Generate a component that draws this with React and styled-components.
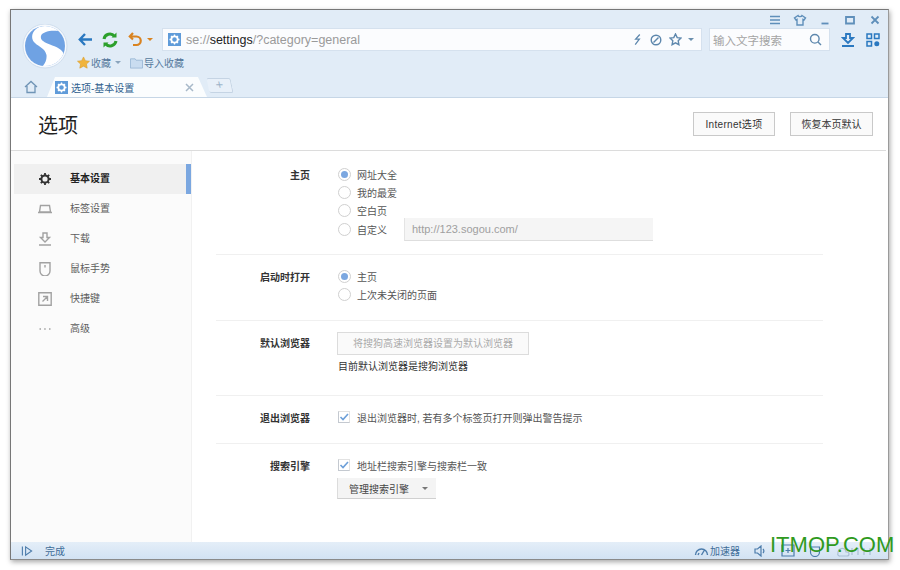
import React from "react";
import styled, { createGlobalStyle } from "styled-components";

const Global = createGlobalStyle`
  html, body {
    margin: 0;
    padding: 0;
    width: 900px;
    height: 570px;
    overflow: hidden;
    background: #fff;
    font-family: "Liberation Sans", "Noto Sans CJK SC", sans-serif;
    font-size: 10px;
    color: #444;
  }
  * { box-sizing: border-box; }
`;

const Frame = styled.div`
  position: relative;
  width: 900px;
  height: 570px;
  padding: 9px 0 0 10px;
`;

const Win = styled.div`
  width: 879px;
  height: 551px;
  border: 1px solid #777;
  border-right-color: #9a9a9a;
  border-bottom-color: #8a8a8a;
  box-shadow: 1px 2px 5px rgba(0, 0, 0, 0.35);
  display: flex;
  flex-direction: column;
  background: #fff;
`;

const Chrome = styled.header`
  height: 88px;
  background: #e1ecf7;
  border-bottom: 1px solid #c6d6e6;
  display: grid;
  grid-template-columns: 67px 1fr;
  grid-template-rows: 16px 26px 25px 20px;
`;

const LogoCell = styled.div`
  grid-column: 1;
  grid-row: 1 / 4;
  padding: 14px 0 0 11px;
`;

const Controls = styled.div`
  grid-column: 2;
  grid-row: 1;
  display: flex;
  justify-content: flex-end;
  align-items: center;
  padding: 3px 6px 0 0;
  gap: 11px;
`;

const Ctl = styled.svg`
  width: 14px;
  height: 12px;
  fill: none;
  stroke: #5f8fba;
  stroke-width: 1.4;
`;

const Toolbar = styled.div`
  grid-column: 2;
  grid-row: 2;
  display: flex;
  align-items: center;
  padding-top: 1px;
`;

const NavIcons = styled.div`
  width: 84px;
  display: flex;
  align-items: center;
  gap: 9px;
`;

const AddressBar = styled.div`
  width: 540px;
  height: 23px;
  background: #fbfcfe;
  border: 1px solid #d5e1ee;
  display: flex;
  align-items: center;
  padding: 0 7px 0 5px;
`;

const Favicon = styled.svg`
  width: 13px;
  height: 13px;
  flex: none;
`;

const Url = styled.div`
  flex: 1;
  margin-left: 5px;
  font-size: 12.5px;
  color: #9a9a9a;
  b {
    font-weight: 400;
    color: #222;
  }
`;

const AddrIcons = styled.div`
  display: flex;
  align-items: center;
  gap: 7px;
`;

const Small = styled.svg`
  width: ${(p) => p.$size || 12}px;
  height: ${(p) => p.$size || 12}px;
  fill: none;
  stroke: #5d87ad;
  stroke-width: 1.4;
  flex: none;
`;

const Caret = styled.i`
  display: block;
  width: 0;
  height: 0;
  flex: none;
  margin-left: ${(p) => p.$left || 0}px;
  border-left: 3px solid transparent;
  border-right: 3px solid transparent;
  border-top: 3px solid ${(p) => p.$color || "#6b8fae"};
`;

const SearchBox = styled.div`
  width: 121px;
  height: 23px;
  margin-left: 7px;
  background: #fbfcfe;
  border: 1px solid #d5e1ee;
  display: flex;
  align-items: center;
  justify-content: space-between;
  padding: 0 7px 0 3px;
  font-size: 11.5px;
  color: #a4a4a4;
`;

const ToolRight = styled.div`
  display: flex;
  align-items: center;
  gap: 11px;
  margin-left: 11px;
`;

const Bookmarks = styled.div`
  grid-column: 2;
  grid-row: 3;
  display: flex;
  align-items: center;
  margin-left: -1px;
  padding-bottom: 4px;
  color: #55799c;
  font-size: 10px;
`;

const Mark = styled.div`
  display: flex;
  align-items: center;
  gap: 1px;
  margin-right: ${(p) => p.$gap || 0}px;
`;

const TabRow = styled.div`
  grid-column: 1 / 3;
  grid-row: 4;
  display: flex;
  align-items: flex-end;
  padding-left: 13px;
`;

const HomeIcon = styled.svg`
  width: 14px;
  height: 14px;
  margin-bottom: 3px;
  fill: none;
  stroke: #6f94b6;
  stroke-width: 1.3;
`;

const Tab = styled.div`
  width: 160px;
  height: 20px;
  margin-left: 9px;
  background: #fbfdfe;
  clip-path: polygon(0 100%, 8px 0, 151px 0, 160px 100%);
  display: flex;
  align-items: center;
  padding: 0 13px 0 8px;
  color: #2f5f8e;
  font-size: 10px;
  span {
    flex: 1;
    margin-left: 3px;
  }
`;

const AddTab = styled.div`
  width: 24px;
  height: 15px;
  margin: 0 0 4px 1px;
  border: 1px solid #c5d4e4;
  border-left: none;
  border-radius: 2px;
  background: #e8f0f9;
  color: #9db4ca;
  font-size: 13px;
  line-height: 12px;
  text-align: center;
  transform: skewX(12deg);
`;

const Body = styled.div`
  flex: 1;
  min-height: 0;
  display: flex;
  flex-direction: column;
`;

const PageHead = styled.div`
  height: 53px;
  flex: none;
  margin-right: 2px;
  border-bottom: 1px solid #dcdcdc;
  display: flex;
  align-items: center;
  padding: 0 13px 0 27px;
`;

const PageTitle = styled.h1`
  flex: 1;
  margin: 0;
  font-size: 20px;
  font-weight: 400;
  color: #222;
`;

const HeadButton = styled.button`
  width: ${(p) => p.$w}px;
  height: 24px;
  margin: 0 0 1px ${(p) => p.$left || 0}px;
  background: #fafafa;
  border: 1px solid #c9c9c9;
  font: inherit;
  font-size: 10px;
  letter-spacing: ${(p) => p.$spread || 0}px;
  color: #333;
  padding: 0;
`;

const Columns = styled.div`
  flex: 1;
  min-height: 0;
  display: flex;
`;

const Sidebar = styled.nav`
  width: 181px;
  flex: none;
  background: #fbfbfb;
  border-right: 1px solid #f1f1f1;
  padding: 13px 0 0 3px;
`;

const Item = styled.div`
  height: 30px;
  display: flex;
  align-items: center;
  padding-left: 24px;
  font-size: 10px;
  color: ${(p) => (p.$active ? "#222" : "#5e5e5e")};
  font-weight: ${(p) => (p.$active ? 700 : 400)};
  background: ${(p) => (p.$active ? "#f0f0f0" : "transparent")};
  border-right: 5px solid ${(p) => (p.$active ? "#7ba7e0" : "transparent")};
  span {
    margin-bottom: 3px;
  }
`;

const ItemIcon = styled.svg`
  width: 14px;
  height: 14px;
  margin-right: 18px;
  fill: none;
  stroke: ${(p) => p.$color || "#a2a2a2"};
  stroke-width: 1.4;
  flex: none;
`;

const Main = styled.main`
  flex: 1;
  padding-left: 24px;
`;

const Section = styled.section`
  width: 607px;
  height: ${(p) => p.$h}px;
  padding-top: ${(p) => p.$top}px;
  border-bottom: ${(p) => (p.$last ? "none" : "1px solid #f0f0f0")};
  display: grid;
  grid-template-columns: 94px 1fr;
  column-gap: 27px;
  align-content: start;
`;

const Label = styled.div`
  text-align: right;
  font-weight: 700;
  font-size: 10px;
  line-height: ${(p) => p.$lh || 22}px;
  color: #333;
`;

const Line = styled.label`
  height: 18.33px;
  display: flex;
  align-items: center;
  padding-left: 1px;
  font-size: 10px;
  color: #555;
`;

const Radio = styled.i`
  width: 13px;
  height: 13px;
  margin-right: 6px;
  border-radius: 50%;
  border: 1px solid #d0d0d0;
  background: #fff;
  flex: none;
  display: flex;
  align-items: center;
  justify-content: center;
  &::after {
    content: "";
    width: 7px;
    height: 7px;
    border-radius: 50%;
    background: ${(p) => (p.$on ? "#7ba7e0" : "transparent")};
  }
`;

const Check = styled.i`
  width: 12px;
  height: 12px;
  margin-right: 7px;
  border: 1px solid #e2e2e2;
  border-left-color: #c4c9d0;
  border-bottom-color: #c4c9d0;
  background: #fff;
  flex: none;
  display: flex;
  svg {
    width: 10px;
    height: 10px;
    fill: none;
    stroke: #6d9fd8;
    stroke-width: 1.6;
  }
`;

const UrlInput = styled.div`
  width: 249px;
  height: 23px;
  margin-left: 17px;
  padding-left: 7px;
  background: #f5f5f5;
  border-bottom: 1px solid #dedede;
  border-left: 1px solid #e4e4e4;
  line-height: 23px;
  font-size: 11px;
  color: #a0a0a0;
`;

const DefaultButton = styled.div`
  width: 192px;
  height: 23px;
  background: #fafafa;
  border: 1px solid #dcdcdc;
  text-align: center;
  line-height: 21px;
  font-size: 10px;
  color: #aaa;
`;

const Note = styled.div`
  margin: 4px 0 0 1px;
  line-height: 16px;
  font-size: 10px;
  color: #333;
`;

const ManageButton = styled.div`
  width: 99px;
  height: 21px;
  margin-top: 4px;
  background: #f4f4f4;
  border-bottom: 1px solid #d0d0d0;
  border-left: 1px solid #dcdcdc;
  display: flex;
  align-items: center;
  padding-left: 11px;
  font-size: 10px;
  color: #444;
`;

const StatusBar = styled.footer`
  height: 17px;
  flex: none;
  background: linear-gradient(#e4eef8, #d2e2f3);
  display: flex;
  align-items: center;
  justify-content: space-between;
  padding: 0 12px 0 10px;
  color: #3f6d99;
  font-size: 10px;
`;

const StatusLeft = styled.div`
  display: flex;
  align-items: center;
  gap: 12px;
`;

const StatusRight = styled.div`
  display: flex;
  align-items: center;
  gap: 14px;
`;

const Accel = styled.div`
  display: flex;
  align-items: center;
  gap: 1px;
`;

const Watermark = styled.div`
  position: absolute;
  left: 770px;
  top: 531px;
  font-size: 22px;
  line-height: 28px;
  color: #2f9a1e;
  white-space: nowrap;
`;

const Logo = () => (
  <svg width="46" height="46" viewBox="0 0 46 46">
    <defs>
      <clipPath id="logo-clip">
        <circle cx="23" cy="22" r="20" />
      </clipPath>
    </defs>
    <circle cx="23" cy="22" r="22" fill="#f6f9fd" stroke="#cfdeee" />
    <circle cx="23" cy="22" r="20" fill="#6fa2e3" />
    <path
      clipPath="url(#logo-clip)"
      d="M36 5 C 30 1 20 0 14 5 C 9 9 9 16 13 19 C 17 23 23 24 24.500 31 C 25 36 23 40 19 44 L 26 44 C 34 43 42 38 42 31 C 41 25 34 23 28 20.500 C 22 18 18 16 19 12 C 20 8 28 6 36 7 Z"
      fill="#fff"
    />
  </svg>
);

const Fav = () => (
  <Favicon viewBox="0 0 13 13">
    <rect width="13" height="13" fill="#5f9bd9" />
    <circle cx="6.5" cy="6.5" r="3.2" fill="none" stroke="#fff" strokeWidth="1.8" />
    <path d="M6.5 1.5v2M6.5 9.5v2M1.5 6.5h2M9.5 6.5h2M3 3l1.3 1.3M8.7 8.7 10 10M3 10l1.3-1.3M8.7 4.3 10 3" stroke="#fff" strokeWidth="1.3" />
  </Favicon>
);

const sideItems = [
  {
    name: "基本设置",
    active: true,
    icon: (
      <>
        <circle cx="7" cy="7" r="3.6" strokeWidth="2" />
        <path d="M7 1v2.400M7 10.600V13M1 7h2.400M10.600 7H13M2.800 2.800l1.700 1.700M9.500 9.500l1.700 1.700M2.800 11.200l1.700-1.700M9.500 4.500l1.700-1.700" strokeWidth="1.800" />
      </>
    ),
  },
  { name: "标签设置", icon: <path d="M2.500 3.500h9l1 6.500h-11zM0 10.500h14" /> },
  { name: "下载", icon: <path d="M5 1h4v4.500h2.500L7 10 2.500 5.500H5zM1 13h12" /> },
  {
    name: "鼠标手势",
    icon: <path d="M2 .8h10v8.200a5 5 0 0 1-10 0zM7 3v2.500" />,
  },
  {
    name: "快捷键",
    icon: <path d="M.8.8h12.400v12.400H.8zM4.500 9.500l4.500-4.500M5 4.500h4.500V9" />,
  },
  {
    name: "高级",
    icon: <path d="M1.500 7h1.500M6.200 7h1.500M11 7h1.500" />,
  },
];

const RadioLine = ({ on, children }) => (
  <Line>
    <Radio $on={on} />
    {children}
  </Line>
);

const CheckLine = ({ children }) => (
  <Line>
    <Check>
      <svg viewBox="0 0 10 10">
        <path d="M1.500 5l2.500 2.500L9 2" />
      </svg>
    </Check>
    {children}
  </Line>
);

const App = () => (
  <Frame>
    <Global />
    <Win>
      <Chrome>
        <LogoCell>
          <Logo />
        </LogoCell>
        <Controls>
          <Ctl viewBox="0 0 14 12"><path d="M2 2.500h10M2 6h10M2 9.500h10" /></Ctl>
          <Ctl viewBox="0 0 14 12"><path d="M5 1.500 1.500 4l1.500 2L4 5.500V11h6V5.500l1 .5 1.500-2L9 1.500c-.5 1.500-3.500 1.500-4 0z" /></Ctl>
          <Ctl viewBox="0 0 14 12"><path d="M3.500 9.500h7" strokeWidth="1.800" /></Ctl>
          <Ctl viewBox="0 0 14 12"><path d="M3 3h8v6.500H3z" strokeWidth="1.800" /></Ctl>
          <Ctl viewBox="0 0 14 12"><path d="M3.500 2.500l7 7M10.500 2.500l-7 7" strokeWidth="1.800" /></Ctl>
        </Controls>
        <Toolbar>
          <NavIcons>
            <svg width="14" height="15" viewBox="0 0 14 15" fill="none" stroke="#2a78c0" strokeWidth="2.400">
              <path d="M7 2 1.800 7.500 7 13M2 7.500h12" />
            </svg>
            <svg width="18" height="18" viewBox="0 0 18 18" fill="none" stroke="#2ca02c" strokeWidth="3">
              <path d="M3 8a6 6 0 0 1 10.500-2.800M15 10a6 6 0 0 1-10.500 2.800" />
              <path d="M15.500 1.500v5h-5zM2.500 16.500v-5h5z" fill="#2ca02c" stroke="none" />
            </svg>
            <svg width="16" height="15" viewBox="0 0 16 15" fill="none" stroke="#d98320" strokeWidth="2.200">
              <path d="M5 1 1.800 4.500 5 7.500M2 4.500h6.500a4 4 0 0 1 0 8.500H5" />
            </svg>
            <Caret $left={-6} $color="#d98320" />
          </NavIcons>
          <AddressBar>
            <Fav />
            <Url>
              se://<b>settings</b>/?category=general
            </Url>
            <AddrIcons>
              <Small $size={11} viewBox="0 0 11 12"><path d="M8 .5 3.500 5.500h4L3 11.500" /></Small>
              <Small viewBox="0 0 12 12"><circle cx="6" cy="6" r="4.800" /><path d="M8.500 3.500l-5 5" /></Small>
              <Small $size={13} viewBox="0 0 13 13"><path d="M6.500 1l1.700 3.600 3.800.5-2.800 2.700.7 3.900-3.400-1.900-3.400 1.900.7-3.900L1 5.100l3.800-.5z" /></Small>
              <Caret $left={-1} />
            </AddrIcons>
          </AddressBar>
          <SearchBox>
            输入文字搜索
            <Small $size={13} viewBox="0 0 13 13"><circle cx="5.800" cy="5.800" r="4.300" /><path d="M9 9l3 3" /></Small>
          </SearchBox>
          <ToolRight>
            <svg width="14" height="14" viewBox="0 0 14 14" fill="none" stroke="#2a78c0" strokeWidth="1.800">
              <path d="M5 1h4v4h3L7 10 2 5h3zM1 13h12" />
            </svg>
            <svg width="14" height="14" viewBox="0 0 14 14" fill="none" stroke="#2a78c0" strokeWidth="1.500">
              <path d="M1 1h4.500v4.500H1zM8.500 1H13v4.500H8.500zM1 8.500h4.500V13H1z" />
              <circle cx="10.800" cy="10.800" r="2.500" fill="#2a78c0" stroke="none" />
            </svg>
          </ToolRight>
        </Toolbar>
        <Bookmarks>
          <Mark $gap={9}>
            <svg width="13" height="13" viewBox="0 0 14 13" fill="#f0b43c" stroke="#d99a25" strokeWidth=".6">
              <path d="M7 .5l2 4 4.500.6-3.300 3.100.8 4.400L7 10.500l-4 2.100.8-4.400L.5 5.100 5 4.500z" />
            </svg>
            收藏
            <Caret $left={3} $color="#8aa4bd" />
          </Mark>
          <Mark>
            <svg width="13" height="12" viewBox="0 0 14 12" fill="#c9dcf0" stroke="#8fb0d0" strokeWidth=".8">
              <path d="M.5 1.500h5l1 1.500h7v8.500H.5z" />
            </svg>
            导入收藏
          </Mark>
        </Bookmarks>
        <TabRow>
          <HomeIcon viewBox="0 0 14 14">
            <path d="M1 7 7 1.500 13 7M3 6v6.500h8V6" />
          </HomeIcon>
          <Tab>
            <Fav />
            <span>选项-基本设置</span>
            <svg width="9" height="9" viewBox="0 0 9 9" fill="none" stroke="#a8b9c9" strokeWidth="1.500">
              <path d="M1 1l7 7M8 1 1 8" />
            </svg>
          </Tab>
          <AddTab>+</AddTab>
        </TabRow>
      </Chrome>
      <Body>
        <PageHead>
          <PageTitle>选项</PageTitle>
          <HeadButton $w={82} $spread={0.3}>Internet选项</HeadButton>
          <HeadButton $w={83} $left={15}>恢复本页默认</HeadButton>
        </PageHead>
        <Columns>
          <Sidebar>
            {sideItems.map((it) => (
              <Item key={it.name} $active={it.active}>
                <ItemIcon viewBox="0 0 14 14" $color={it.active ? "#333" : undefined}>
                  {it.icon}
                </ItemIcon>
                <span>{it.name}</span>
              </Item>
            ))}
          </Sidebar>
          <Main>
            <Section $h={104} $top={14}>
              <Label>主页</Label>
              <div>
                <RadioLine on>网址大全</RadioLine>
                <RadioLine>我的最爱</RadioLine>
                <RadioLine>空白页</RadioLine>
                <RadioLine>
                  自定义
                  <UrlInput>http://123.sogou.com/</UrlInput>
                </RadioLine>
              </div>
            </Section>
            <Section $h={66} $top={12}>
              <Label>启动时打开</Label>
              <div>
                <RadioLine on>主页</RadioLine>
                <RadioLine>上次未关闭的页面</RadioLine>
              </div>
            </Section>
            <Section $h={75} $top={11}>
              <Label $lh={24}>默认浏览器</Label>
              <div>
                <DefaultButton>将搜狗高速浏览器设置为默认浏览器</DefaultButton>
                <Note>目前默认浏览器是搜狗浏览器</Note>
              </div>
            </Section>
            <Section $h={48} $top={12}>
              <Label>退出浏览器</Label>
              <div>
                <CheckLine>退出浏览器时, 若有多个标签页打开则弹出警告提示</CheckLine>
              </div>
            </Section>
            <Section $h={80} $top={12} $last>
              <Label>搜索引擎</Label>
              <div>
                <CheckLine>地址栏搜索引擎与搜索栏一致</CheckLine>
                <ManageButton>
                  管理搜索引擎
                  <Caret $left={13} $color="#777" />
                </ManageButton>
              </div>
            </Section>
          </Main>
        </Columns>
      </Body>
      <StatusBar>
        <StatusLeft>
          <svg width="12" height="12" viewBox="0 0 13 12" fill="none" stroke="#4c7cab" strokeWidth="1.200">
            <path d="M1.500 1v10M5 1.500l6.500 4.500L5 10.500z" />
          </svg>
          完成
        </StatusLeft>
        <StatusRight>
          <Accel>
            <svg width="15" height="11" viewBox="0 0 15 11" fill="none" stroke="#4c7cab" strokeWidth="1.400">
              <path d="M1.500 10a6 6 0 0 1 12 0M7.500 10l3-5M4 10l1-2" />
            </svg>
            加速器
          </Accel>
          <svg width="13" height="12" viewBox="0 0 13 12" fill="none" stroke="#4c7cab" strokeWidth="1.200">
            <path d="M1 4h2.500L7 1v10L3.500 8H1zM9 4a3 3 0 0 1 0 4" />
          </svg>
          <svg width="14" height="13" viewBox="0 0 14 13" fill="none" stroke="#4c7cab" strokeWidth="1.200">
            <path d="M1 1h12v11H1zM7 4v5M4.500 6.500h5" />
          </svg>
          <svg width="13" height="13" viewBox="0 0 13 13" fill="none" stroke="#4c7cab" strokeWidth="1.200">
            <path d="M1.500 3h9v5a4.500 4.500 0 0 1-9 0z" />
          </svg>
          <svg width="40" height="12" viewBox="0 0 40 12" fill="none" stroke="#a9bfd4" strokeWidth="1.200">
            <path d="M2 8a4 4 0 0 1 8-1h1a2 2 0 0 1 0 4H4a2 2 0 0 1-2-3zM16 3v7M22 3v7M28 3v7M34 3v7" />
          </svg>
        </StatusRight>
      </StatusBar>
    </Win>
    <Watermark>ITMOP.COM</Watermark>
  </Frame>
);

export default App;
